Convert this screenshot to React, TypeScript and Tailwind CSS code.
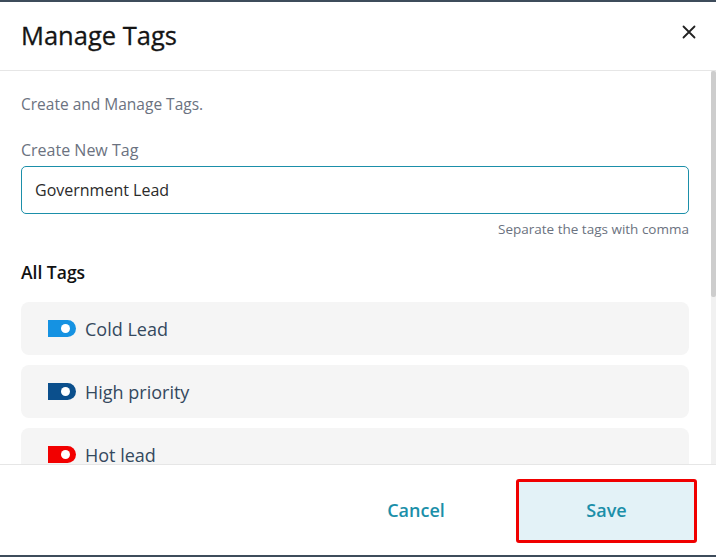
import React from "react";

const tags = [
  { name: "Cold Lead", color: "bg-[#1592e2]" },
  { name: "High priority", color: "bg-[#0b4f8c]" },
  { name: "Hot lead", color: "bg-[#f20000]" },
];

export default function App() {
  return (
    <div
      className="w-[716px] h-[557px] bg-white flex flex-col border-t-2 border-b-2 border-[#3e4c5b] overflow-hidden"
      style={{ fontFamily: '"Open Sans", sans-serif' }}
    >
      <div className="h-[69px] shrink-0 flex items-center justify-between pl-[21px] pr-[20px] border-b border-[#e6e6e6]">
        <h1 className="text-[25.5px] text-[#151515] leading-none [-webkit-text-stroke:0.3px_#151515]">Manage Tags</h1>
        <svg width="14" height="14" viewBox="0 0 14 14" className="mt-[-8px]">
          <path d="M1.5 1.5 L12.5 12.5 M12.5 1.5 L1.5 12.5" stroke="#222" strokeWidth="1.8" strokeLinecap="round" />
        </svg>
      </div>
      <div className="flex-1 flex overflow-hidden">
        <div className="flex-1 pl-[21px] pr-[22px] pt-[23px] overflow-hidden">
          <p className="text-[15.5px] text-[#6b7280] leading-[20px]">Create and Manage Tags.</p>
          <p className="text-[16px] text-[#6b7280] leading-[22px] mt-[25px]">Create New Tag</p>
          <div className="mt-[5px] h-[48px] border border-[#1b8fa9] rounded-[5px] flex items-center pl-[13px] text-[16px] text-[#2b2b2b]">
            Government Lead
          </div>
          <p className="text-right text-[13.5px] text-[#6b7280] leading-[18px] mt-[6px]">Separate the tags with comma</p>
          <p className="text-[17.5px] font-semibold text-[#111] leading-[24px] mt-[22px]">All Tags</p>
          <div className="mt-[18px] flex flex-col gap-[10px]">
            {tags.map((t) => (
              <div key={t.name} className="h-[53px] bg-[#f5f5f5] rounded-[8px] flex items-center pl-[27px] gap-[9px]">
                <span className={`w-[28px] h-[17px] ${t.color} rounded-[5px] rounded-r-full flex items-center justify-end pr-[6px]`}>
                  <span className="w-[9px] h-[9px] bg-white rounded-full" />
                </span>
                <span className="text-[18px] text-[#34495e] leading-none">{t.name}</span>
              </div>
            ))}
          </div>
        </div>
        <div className="w-[5px] bg-[#f1f1f1] flex flex-col">
          <div className="h-[226px] bg-[#cdcdcd] rounded-[2px]" />
        </div>
      </div>
      <div className="h-[91px] shrink-0 border-t border-[#e6e6e6] flex items-center justify-end pr-[19px] pt-[1px]">
        <button className="text-[18px] font-semibold text-[#1b8fa9] w-[200px] h-[60px]">Cancel</button>
        <button className="w-[181px] h-[64px] bg-[#e3f2f7] border-[3px] border-[#f00000] rounded-[3px] text-[18px] font-semibold text-[#1b8fa9]">
          Save
        </button>
      </div>
    </div>
  );
}
